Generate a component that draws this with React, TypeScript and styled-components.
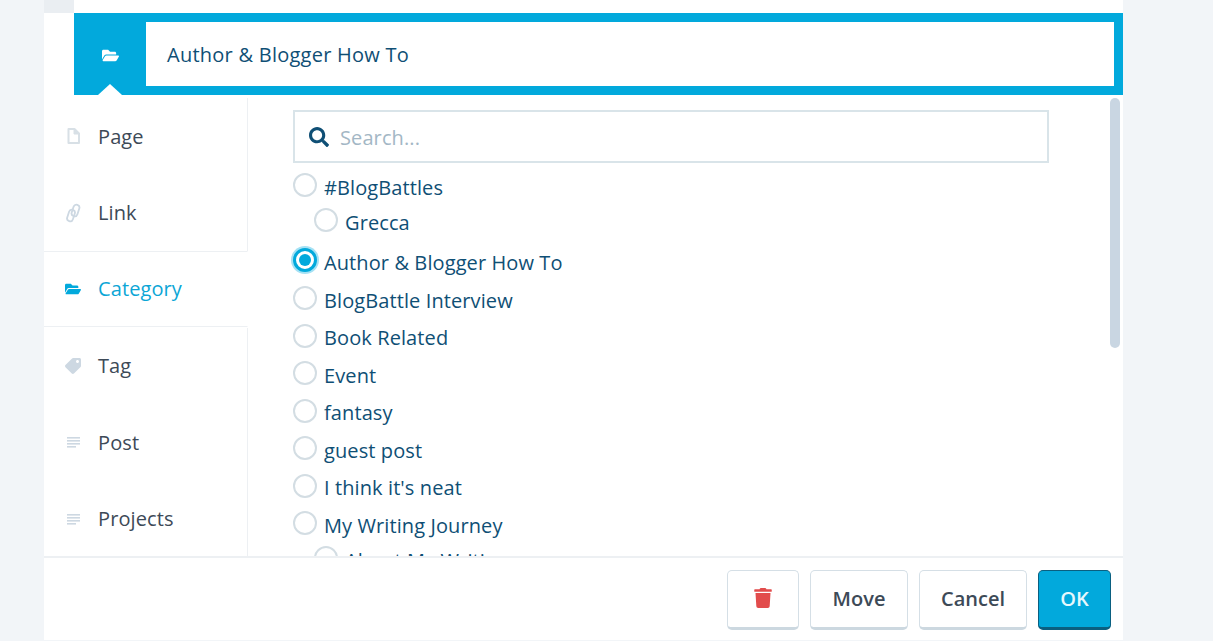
import React from "react";
import styled, { createGlobalStyle } from "styled-components";
import { FaFolderOpen, FaTag, FaSearch, FaTrash } from "react-icons/fa";

const Global = createGlobalStyle`
  html, body { margin: 0; padding: 0; height: 100%; background: #f2f5f8; overflow: hidden; }
  body { font-family: "Open Sans", "Noto Sans", sans-serif; letter-spacing: 0.1px; }
  * { box-sizing: border-box; }
`;
const Page = styled.div`
  width: 1213px; height: 641px; padding-left: 44px; overflow: hidden;
`;
const Modal = styled.div`
  width: 1079px; height: 640px; display: flex; flex-direction: column; background: #fff;
`;
const TopStrip = styled.div`
  height: 13px; flex: none; display: flex;
`;
const TopTab = styled.div`
  width: 30px; background: #eaeef2;
`;
const Header = styled.div`
  flex: none; height: 82px; margin-left: 30px; display: flex; background: #02a9dc; position: relative;
`;
const HeaderIcon = styled.div`
  width: 72px; height: 84px; display: flex; align-items: center; justify-content: center; color: #fff; font-size: 17px;
`;
const HeaderInput = styled.div`
  width: 968px; height: 64px; margin-top: 9px; background: #fff; display: flex; align-items: center; padding-left: 21px;
  color: #0f4f75; font-size: 20px; letter-spacing: 0.25px;
`;
const Notch = styled.div`
  position: absolute; left: 24px; bottom: 0; width: 0; height: 0;
  border-left: 12px solid transparent; border-right: 12px solid transparent; border-bottom: 11px solid #fff;
`;
const Body = styled.div`
  flex: 1; min-height: 0; display: flex; position: relative; margin-top: 2px;
`;
const Side = styled.div`
  width: 204px; flex: none; display: flex; flex-direction: column; padding-top: 1px;
`;
const Tab = styled.div<{ $active?: boolean }>`
  height: ${p => (p.$active ? "75.5px" : "76.5px")}; margin-bottom: ${p => (p.$active ? "1px" : "0")};
  flex: none; display: flex; align-items: center; padding-left: 21px; gap: 17px; font-size: 20px;
  color: ${p => (p.$active ? "#0ca6d6" : "#3d4a57")};
  border-right: ${p => (p.$active ? "1px solid transparent" : "1px solid #edf0f3")};
  border-top: ${p => (p.$active ? "1px solid #edf0f3" : "none")};
  border-bottom: ${p => (p.$active ? "1px solid #edf0f3" : "none")};
  svg { width: 16px; height: 16px; flex: none; color: ${p => (p.$active ? "#02a9dc" : "#cdd8e2")}; }
`;
const FlippedTag = styled(FaTag)`
  transform: scaleX(-1);
`;
const LinkSvg = styled.svg`
  && { height: 20px; }
`;
const Main = styled.div`
  flex: 1; min-width: 0; overflow: hidden; padding: 13px 0 0 45px; position: relative;
`;
const Search = styled.div`
  width: 756px; height: 53px; border: 2px solid #d9e4e9; display: flex; align-items: center; padding: 2px 0 0 14px; gap: 11px;
  color: #0f4f75; font-size: 20px; margin-bottom: 6px;
  svg { width: 20px; height: 20px; flex: none; margin-top: -2px; }
`;
const Placeholder = styled.span`
  color: #a3b7c5;
`;
const Row = styled.div<{ $child?: boolean; $next: number }>`
  height: 36px; margin-bottom: ${p => p.$next - 36}px; display: flex; align-items: center; gap: 7px;
  color: #0f4f75; font-size: 20px; white-space: nowrap;
  padding-left: ${p => (p.$child ? "21px" : "0")};
`;
const Radio = styled.span<{ $on?: boolean }>`
  width: 24px; height: 24px; border-radius: 50%; flex: none; background: #fff; margin-bottom: 4px;
  border: ${p => (p.$on ? "3px solid #02a9dc" : "2px solid #d3dde3")};
  box-shadow: ${p => (p.$on ? "0 0 0 2px #a5e1f4" : "none")};
  display: flex; align-items: center; justify-content: center;
  &::after { content: ""; width: 12px; height: 12px; border-radius: 50%; background: ${p => (p.$on ? "#02a9dc" : "transparent")}; }
`;
const Scrollbar = styled.div`
  position: absolute; right: 3px; top: 1px; width: 10px; height: 250px; border-radius: 5px; background: #c9d6e2;
`;
const Footer = styled.div`
  flex: none; height: 84px; border-top: 2px solid #edf0f3; display: flex; justify-content: flex-end; align-items: flex-start;
  gap: 11px; padding: 12px 12px 0 0;
`;
const Btn = styled.button<{ $primary?: boolean; $w: number }>`
  width: ${p => p.$w}px; height: 60px; border-radius: 5px; font: 600 20px "Open Sans", "Noto Sans", sans-serif;
  display: flex; align-items: center; justify-content: center; padding: 0 0 2px;
  background: ${p => (p.$primary ? "#02a9dc" : "#fff")};
  color: ${p => (p.$primary ? "#e6f8fd" : "#3d4a57")};
  border: 1px solid ${p => (p.$primary ? "#0a5f80" : "#d5dfe6")};
  border-bottom: 3px solid ${p => (p.$primary ? "#0a5f80" : "#ccd8e0")};
  svg { width: 18px; height: 20px; color: #e24c4c; }
`;
const FileIcon = () => (
  <svg viewBox="0 0 16 16" fill="none" stroke="#d8e0e6" strokeWidth="2" strokeLinejoin="round">
    <path d="M3.5 1H9.5L14 5.5V15H3.5Z" />
    <path d="M9 1V6H14" fill="#d8e0e6" strokeWidth="1" />
  </svg>
);
const LinkIcon = () => (
  <LinkSvg viewBox="0 0 16 20" fill="none" stroke="#cdd8e2" strokeWidth="1.8">
    <rect x="3" y="6.5" width="6" height="12" rx="3" transform="rotate(18 6 12.5)" />
    <rect x="7.5" y="1.5" width="6" height="12" rx="3" transform="rotate(18 10.5 7.5)" />
  </LinkSvg>
);
const LinesIcon = () => (
  <svg viewBox="0 0 16 16" fill="currentColor">
    <rect x="2" y="3" width="13" height="1.6" />
    <rect x="2" y="6" width="13" height="1.6" />
    <rect x="2" y="9" width="13" height="1.6" />
    <rect x="2" y="12" width="9" height="1.6" />
  </svg>
);
const rows: [string, boolean, boolean, number][] = [
  ["#BlogBattles", false, false, 35],
  ["Grecca", true, false, 40],
  ["Author & Blogger How To", false, true, 38],
  ["BlogBattle Interview", false, false, 37.5],
  ["Book Related", false, false, 37.5],
  ["Event", false, false, 37.5],
  ["fantasy", false, false, 37.5],
  ["guest post", false, false, 37.5],
  ["I think it's neat", false, false, 37.5],
  ["My Writing Journey", false, false, 35],
  ["About My Writing", true, false, 36],
];
export default function App() {
  return (
    <Page>
      <Global />
      <Modal>
        <TopStrip><TopTab /></TopStrip>
        <Header>
          <HeaderIcon><FaFolderOpen /></HeaderIcon>
          <HeaderInput>Author &amp; Blogger How To</HeaderInput>
          <Notch />
        </Header>
        <Body>
          <Side>
            <Tab><FileIcon /><span>Page</span></Tab>
            <Tab><LinkIcon /><span>Link</span></Tab>
            <Tab $active><FaFolderOpen /><span>Category</span></Tab>
            <Tab><FlippedTag /><span>Tag</span></Tab>
            <Tab><LinesIcon /><span>Post</span></Tab>
            <Tab><LinesIcon /><span>Projects</span></Tab>
          </Side>
          <Main>
            <Search><FaSearch /><Placeholder>Search...</Placeholder></Search>
            {rows.map(([t, c, on, n]) => (
              <Row key={t} $child={c} $next={n}><Radio $on={on} /><span>{t}</span></Row>
            ))}
            <Scrollbar />
          </Main>
        </Body>
        <Footer>
          <Btn $w={72}><FaTrash /></Btn>
          <Btn $w={98}>Move</Btn>
          <Btn $w={108}>Cancel</Btn>
          <Btn $w={73} $primary>OK</Btn>
        </Footer>
      </Modal>
    </Page>
  );
}
